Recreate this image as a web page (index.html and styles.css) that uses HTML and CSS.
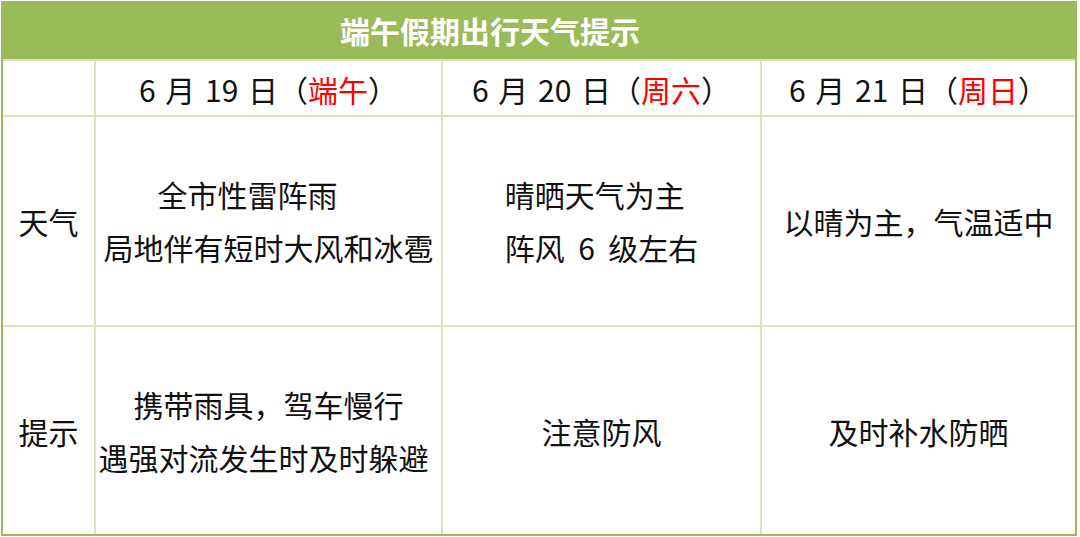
FILE: index.html
```html
<!DOCTYPE html>
<html lang="zh-CN">
<head>
<meta charset="utf-8">
<title>端午假期出行天气提示</title>
<link rel="stylesheet" href="styles.css">
</head>
<body>
<div class="sheet">
  <div class="title">端午假期出行天气提示</div>

  <div class="cell"></div>
  <div class="cell date">6 月 19 日（<span class="red">端午</span>）</div>
  <div class="cell date">6 月 20 日（<span class="red">周六</span>）</div>
  <div class="cell date">6 月 21 日（<span class="red">周日</span>）</div>

  <div class="cell">天气</div>
  <div class="cell"><div class="lines"><span class="shift">全市性雷阵雨</span><br>局地伴有短时大风和冰雹</div></div>
  <div class="cell"><div class="lines left">晴晒天气为主<br>阵风&nbsp; 6&nbsp; 级左右</div></div>
  <div class="cell">以晴为主，气温适中</div>

  <div class="cell">提示</div>
  <div class="cell"><div class="lines">携带雨具，驾车慢行<br><span class="nudge">遇强对流发生时及时躲避</span></div></div>
  <div class="cell">注意防风</div>
  <div class="cell">及时补水防晒</div>
</div>
</body>
</html>
```

FILE: styles.css
```css
html, body {
  margin: 0;
  padding: 0;
  background: #ffffff;
}

body {
  font-family: "Noto Sans CJK SC", "Noto Sans", sans-serif;
  color: #111111;
}

.sheet {
  margin: 1px 0 0 1px;
  width: 1072px;
  border: 2px solid #9bbb59;
  display: grid;
  grid-template-columns: 91px 345px 317px 313px;
  grid-template-rows: 56px 54px 208px 207px;
  gap: 2px;
  background: #d8e4bd;
}

.title {
  grid-column: 1 / -1;
  background: #9bbb59;
  color: #ffffff;
  font-weight: bold;
  font-size: 30px;
  display: flex;
  align-items: center;
  justify-content: center;
  padding: 0 98px 2px 0;
}

.cell {
  background: #ffffff;
  font-size: 30px;
  display: flex;
  align-items: center;
  justify-content: center;
  text-align: center;
  white-space: nowrap;
}

.date {
  word-spacing: 3px;
  padding-top: 2px;
}

.lines {
  line-height: 53px;
  text-align: center;
}

.lines.left {
  text-align: left;
}

.shift {
  display: inline-block;
  margin-right: 42px;
}

.nudge {
  display: inline-block;
  margin-right: 10px;
}

.red {
  color: #ff0000;
}
```
